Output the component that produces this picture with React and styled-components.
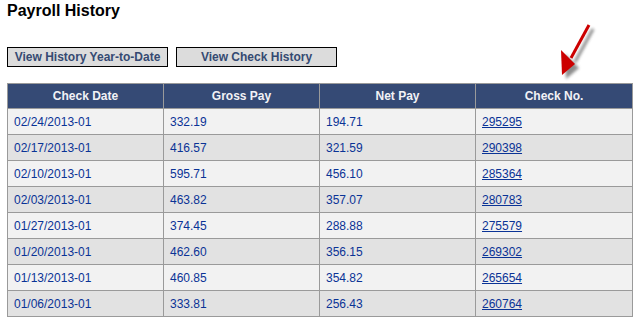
import React from "react";
import styled, { createGlobalStyle } from "styled-components";

const Global = createGlobalStyle`
  html, body { margin: 0; padding: 0; background: #ffffff; }
  body { font-family: Arial, "Liberation Sans", sans-serif; }
`;

const Page = styled.div`
  position: relative;
  width: 638px;
  height: 330px;
  padding: 0 7px;
  box-sizing: border-box;
`;

const Title = styled.h1`
  margin: 0;
  padding-top: 1px;
  font-size: 16px;
  line-height: 19px;
  font-weight: bold;
  color: #000;
`;

const Toolbar = styled.div`
  display: flex;
  gap: 8px;
  margin-top: 27px;
`;

const Button = styled.button`
  width: 161px;
  height: 20px;
  box-sizing: border-box;
  border: 1px solid #000;
  background: #dcdcdc;
  color: #354a72;
  font-family: Arial, "Liberation Sans", sans-serif;
  font-size: 12px;
  font-weight: bold;
  padding: 0;
  line-height: 18px;
  text-align: center;
`;

const Table = styled.table`
  margin-top: 16px;
  border-collapse: collapse;
  table-layout: fixed;
  width: 625px;
  font-size: 12px;
`;

const Th = styled.th`
  height: 25px;
  box-sizing: border-box;
  padding: 0;
  border: 1px solid #9a9a9a;
  background: #354a75;
  color: #f2f2f6;
  font-weight: bold;
  text-align: center;
`;

const Tr = styled.tr`
  background: ${(p) => (p.$alt ? "#e2e2e2" : "#f2f2f2")};
`;

const Td = styled.td`
  height: 25px;
  padding: 0 6px;
  border: 1px solid #9a9a9a;
  color: #0a3396;
`;

const Link = styled.a`
  color: #0a3396;
  text-decoration: underline;
`;

const Arrow = styled.svg`
  position: absolute;
  left: 552px;
  top: 18px;
`;

const rows = [
  ["02/24/2013-01", "332.19", "194.71", "295295"],
  ["02/17/2013-01", "416.57", "321.59", "290398"],
  ["02/10/2013-01", "595.71", "456.10", "285364"],
  ["02/03/2013-01", "463.82", "357.07", "280783"],
  ["01/27/2013-01", "374.45", "288.88", "275579"],
  ["01/20/2013-01", "462.60", "356.15", "269302"],
  ["01/13/2013-01", "460.85", "354.82", "265654"],
  ["01/06/2013-01", "333.81", "256.43", "260764"],
];

export default function App() {
  return (
    <>
      <Global />
      <Page>
        <Title>Payroll History</Title>
        <Toolbar>
          <Button>View History Year-to-Date</Button>
          <Button>View Check History</Button>
        </Toolbar>
        <Table>
          <colgroup>
            <col style={{ width: "156px" }} />
            <col style={{ width: "156px" }} />
            <col style={{ width: "156px" }} />
            <col style={{ width: "157px" }} />
          </colgroup>
          <thead>
            <tr>
              <Th>Check Date</Th>
              <Th>Gross Pay</Th>
              <Th>Net Pay</Th>
              <Th>Check No.</Th>
            </tr>
          </thead>
          <tbody>
            {rows.map((r, i) => (
              <Tr key={r[3]} $alt={i % 2 === 1}>
                <Td>{r[0]}</Td>
                <Td>{r[1]}</Td>
                <Td>{r[2]}</Td>
                <Td>
                  <Link href="#">{r[3]}</Link>
                </Td>
              </Tr>
            ))}
          </tbody>
        </Table>
        <Arrow width="50" height="66" viewBox="0 0 50 66">
          <defs>
            <filter id="sh" x="-50%" y="-50%" width="200%" height="200%">
              <feGaussianBlur stdDeviation="1.6" />
            </filter>
          </defs>
          <g transform="translate(4,4)" fill="#6f6f6f" stroke="#6f6f6f" filter="url(#sh)" opacity="0.8">
            <line x1="37" y1="7" x2="19" y2="40" strokeWidth="3" />
            <polygon points="9,32 10,57 23,46" stroke="none" />
          </g>
          <g fill="#cc0000" stroke="#cc0000">
            <line x1="37" y1="7" x2="19" y2="40" strokeWidth="3" />
            <polygon points="9,32 10,57 23,46" stroke="none" />
          </g>
        </Arrow>
      </Page>
    </>
  );
}
